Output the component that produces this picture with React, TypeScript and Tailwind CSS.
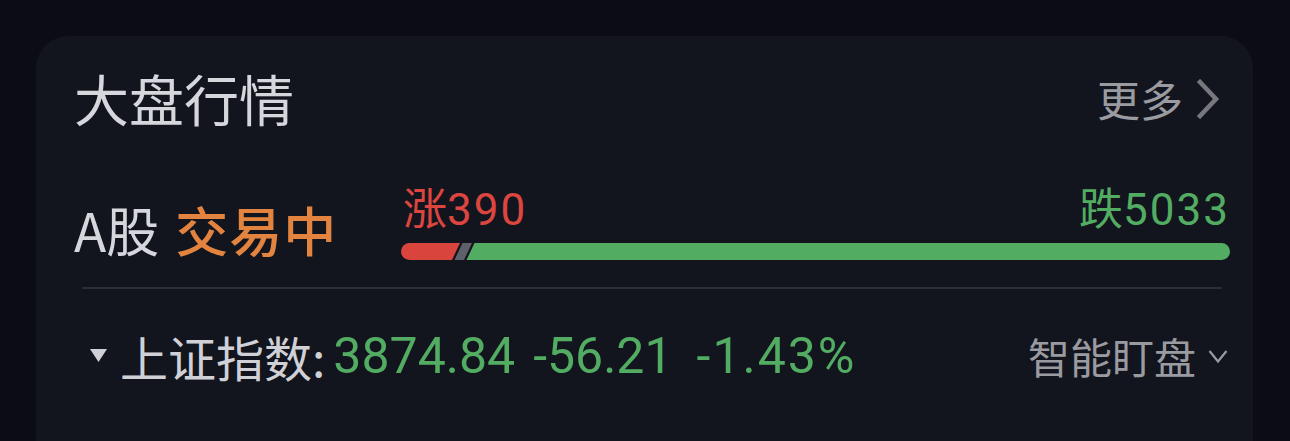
import React from "react";

const cjk = { fontFamily: '"Noto Sans CJK SC", "Noto Sans", sans-serif' };
const num = { fontFamily: 'Roboto, "Noto Sans CJK SC", sans-serif' };

function ChevronRight() {
  return (
    <svg width="26" height="40" viewBox="0 0 26 40" className="ml-[12px] shrink-0">
      <polyline points="5,3 21,20 5,37" fill="none" stroke="#77787e" strokeWidth="4.5" strokeLinecap="square" />
    </svg>
  );
}

function ChevronDown() {
  return (
    <svg width="20" height="16" viewBox="0 0 20 16" className="ml-[12px] shrink-0 block" style={{ minWidth: 20 }}>
      <polyline points="1.5,3 10,13.5 18.5,3" fill="none" stroke="#9a9ba1" strokeWidth="2.2" />
    </svg>
  );
}

function Bar() {
  const w = 829;
  const h = 17;
  return (
    <svg width={w} height={h} viewBox={`0 0 ${w} ${h}`} className="block">
      <defs>
        <clipPath id="barclip">
          <rect x="0" y="0" width={w} height={h} rx={h / 2} />
        </clipPath>
      </defs>
      <g clipPath="url(#barclip)">
        <polygon points={`0,0 59,0 51,17 0,17`} fill="#d9453d" />
        <polygon points={`61.5,0 71,0 63,17 53.5,17`} fill="#5e606a" />
        <polygon points={`73.5,0 ${w},0 ${w},17 65.5,17`} fill="#52ac62" />
      </g>
    </svg>
  );
}

export default function App() {
  return (
    <div className="w-full h-[441px] overflow-hidden bg-[#0b0c14] pt-[36px] pl-[36px] pr-[37px]">
      <div className="h-[480px] rounded-[32px] bg-[#13151e] pl-[38px] pr-[23px] pt-[34px] flex flex-col">
        {/* header */}
        <div className="flex items-center justify-between h-[55px]">
          <div className="text-[55px] leading-[55px] text-[#d6d7dc]" style={cjk}>
            大盘行情
          </div>
          <div className="flex items-center mr-[9px] mt-[2px]">
            <span className="text-[43px] leading-[43px] text-[#9a9ba1]" style={cjk}>
              更多
            </span>
            <ChevronRight />
          </div>
        </div>

        {/* A股 row */}
        <div className="flex mt-[61px] h-[75px]">
          <div className="w-[327px] mt-[10px] flex items-center text-[53px] leading-[54px]" style={cjk}>
            <span className="text-[#d6d7dc]">A股</span>
            <span className="ml-[16px] text-[#e2843f] font-medium tracking-[1px]">交易中</span>
          </div>
          <div className="flex-1 flex flex-col">
            <div className="flex justify-between h-[44px] items-center text-[44px] leading-[44px] pl-[2px] whitespace-nowrap">
              <span className="text-[#dc463e] whitespace-nowrap">
                <span style={cjk}>涨</span>
                <span className="tracking-[2px]" style={num}>390</span>
              </span>
              <span className="text-[#52ac62] whitespace-nowrap">
                <span style={cjk}>跌</span>
                <span className="tracking-[2px]" style={num}>5033</span>
              </span>
            </div>
            <div className="mt-[13px]">
              <Bar />
            </div>
          </div>
        </div>

        {/* divider */}
        <div className="mt-[26px] ml-[8px] mr-[8px] h-[1.5px] bg-[#2b2e37]" />

        {/* index row */}
        <div className="mt-[42px] h-[50px] flex items-center justify-between">
          <div className="flex items-center">
            <svg width="17" height="13" viewBox="0 0 17 13" className="ml-[16px] mr-[13px]">
              <polygon points="0,0 17,0 8.5,13" fill="#d0d1d6" />
            </svg>
            <span className="text-[48px] leading-[50px] text-[#d0d1d6]" style={cjk}>
              上证指数:
            </span>
            <span className="flex text-[50px] leading-[50px] text-[#52ac62] ml-[8px] whitespace-nowrap" style={num}>
              <span>3874.84</span>
              <span className="ml-[18px]">-56.21</span>
              <span className="ml-[24px] tracking-[2px]">-1.43%</span>
            </span>
          </div>
          <div className="flex items-center mr-[2px]">
            <span className="text-[42px] leading-[50px] text-[#9a9ba1]" style={cjk}>
              智能盯盘
            </span>
            <ChevronDown />
          </div>
        </div>
      </div>
    </div>
  );
}
